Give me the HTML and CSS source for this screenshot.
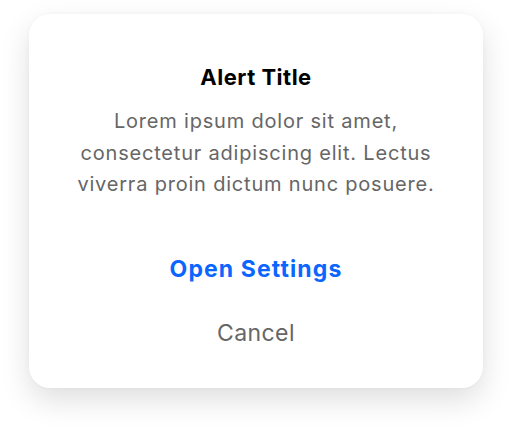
FILE: index.html
```html
<!DOCTYPE html>
<html>
<head>
<meta charset="utf-8">
<link rel="stylesheet" href="styles.css">
</head>
<body>
<div class="alert">
  <div class="content">
    <h1 class="title">Alert Title</h1>
    <p class="message">Lorem ipsum dolor sit amet, consectetur adipiscing elit. Lectus viverra proin dictum nunc posuere.</p>
  </div>
  <div class="actions">
    <button class="action primary">Open Settings</button>
    <button class="action">Cancel</button>
  </div>
</div>
</body>
</html>
```
FILE: styles.css
```css
html, body {
  margin: 0;
  padding: 0;
  background: #ffffff;
  height: 100%;
}
body {
  font-family: Inter, "Noto Sans", sans-serif;
  padding: 14px 29px;
  box-sizing: border-box;
}
.alert {
  width: 454px;
  height: 374px;
  box-sizing: border-box;
  background: #ffffff;
  border-radius: 21px;
  box-shadow: 0 12px 30px rgba(0, 0, 0, 0.13), 0 0 4px rgba(0, 0, 0, 0.03);
  display: flex;
  flex-direction: column;
  align-items: center;
  padding: 50px 40px 0;
}
.content {
  display: flex;
  flex-direction: column;
  align-items: center;
  gap: 16px;
}
.title {
  margin: 0;
  font-size: 22px;
  font-weight: 700;
  line-height: 26px;
  letter-spacing: 0.5px;
  color: #000000;
}
.message {
  margin: 0;
  max-width: 370px;
  font-size: 20px;
  line-height: 31.5px;
  letter-spacing: 0.8px;
  color: #666666;
  text-align: center;
}
.actions {
  margin-top: 36px;
  display: flex;
  flex-direction: column;
  align-items: center;
}
.action {
  border: none;
  background: none;
  font-family: inherit;
  font-size: 23px;
  line-height: 64px;
  padding: 0 16px;
  letter-spacing: 0.4px;
  color: #666666;
}
.action.primary {
  color: #0a66ff;
  font-weight: 700;
  letter-spacing: 1.1px;
}
```
